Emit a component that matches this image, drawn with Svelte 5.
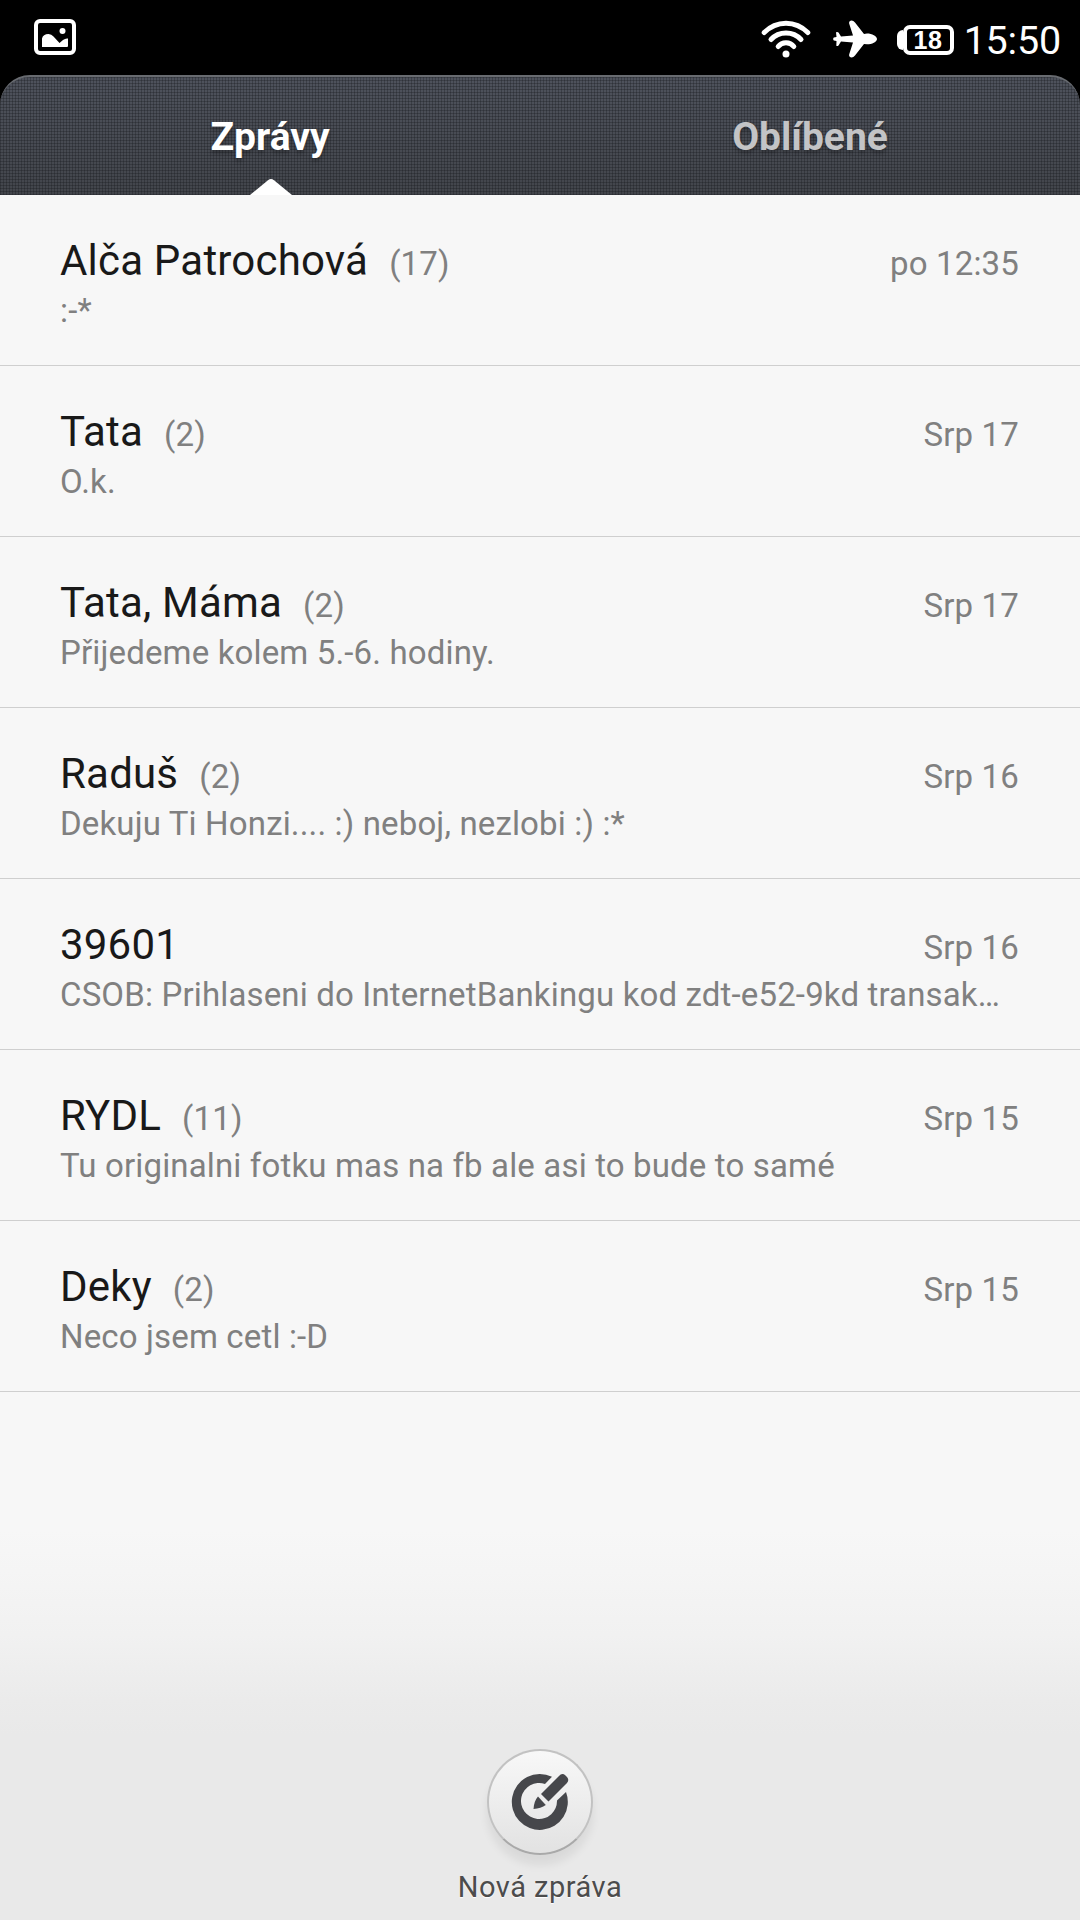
<script lang="ts">
  type Thread = { name: string; count?: number; date: string; preview: string };

  const threads: Thread[] = [
    { name: 'Alča Patrochová', count: 17, date: 'po 12:35', preview: ':-*' },
    { name: 'Tata', count: 2, date: 'Srp 17', preview: 'O.k.' },
    { name: 'Tata, Máma', count: 2, date: 'Srp 17', preview: 'Přijedeme kolem 5.-6. hodiny.' },
    { name: 'Raduš', count: 2, date: 'Srp 16', preview: 'Dekuju Ti Honzi.... :) neboj, nezlobi :) :*' },
    { name: '39601', date: 'Srp 16', preview: 'CSOB: Prihlaseni do InternetBankingu kod zdt-e52-9kd transak…' },
    { name: 'RYDL', count: 11, date: 'Srp 15', preview: 'Tu originalni fotku mas na fb ale asi to bude to samé' },
    { name: 'Deky', count: 2, date: 'Srp 15', preview: 'Neco jsem cetl :-D' },
  ];

  let active = $state(0);
  const tabs = ['Zprávy', 'Oblíbené'];
</script>

<div class="screen">
  <div class="status">
    <svg class="shot" viewBox="0 0 42 36" width="42" height="36">
      <rect x="2" y="2" width="38" height="32" rx="4" fill="none" stroke="#fff" stroke-width="4" />
      <path d="M8 28V19.500Q9 15 14.500 15Q17.500 15 19.500 17.500L25.500 24L29 21Q31.500 19 34 19.500V27Q34 28 33 28Z" fill="#fff" />
      <circle cx="28.500" cy="12" r="3" fill="#fff" />
    </svg>
    <div class="right">
      <svg class="wifi" viewBox="0 0 50 38" width="50" height="38" fill="none" stroke="#fff" stroke-width="5" stroke-linecap="round">
        <path d="M3.200 12.500Q12.500 3.200 25 3.200T46.800 12.500" />
        <path d="M10 19.500Q16 13 25 13T40 19.500" />
        <path d="M17.200 26.500Q20 22.800 25 22.800T32.800 26.500" />
        <circle cx="25" cy="34" r="3.500" fill="#fff" stroke="none" />
      </svg>
      <svg class="plane" viewBox="0 0 44 38" width="44" height="38" fill="#fff">
        <path d="M34 13.500C39 13.500 44 16 44 19S39 24.300 34 24.300L31 24L22 35.500Q20 38 17.500 37.300Q15.500 36.500 16.300 34L20 22.500L8 21.500L5.500 25.500Q4.500 26.500 3.300 25.700L3.500 21L.8 20.500Q-.5 19 .8 17.500L3.500 17L3 12.300Q4.500 11.500 5.500 12.500L8 16.500L20 15.500L16.300 4Q15.500 1.500 17.500.7Q20 0 22 2.500L31 14Z" />
      </svg>
      <div class="battery">
        <span class="nub"></span>
        <span class="cell">18</span>
      </div>
      <span class="clock">15:50</span>
    </div>
  </div>

  <nav class="tabs">
    {#each tabs as tab, i}
      <button type="button" class:active={active === i} onclick={() => (active = i)}>
        <span>{tab}</span>
        {#if active === i}
          <svg class="pointer" viewBox="0 0 42 16" width="42" height="16">
            <path d="M0 16L18 1.200Q21-1 24 1.200L42 16Z" fill="#fff" />
          </svg>
        {/if}
      </button>
    {/each}
  </nav>

  <ul class="list">
    {#each threads as t}
      <li>
        <div class="line">
          <span class="name">{t.name}</span>
          {#if t.count}<span class="count">({t.count})</span>{/if}
          <span class="date">{t.date}</span>
        </div>
        <div class="preview">{t.preview}</div>
      </li>
    {/each}
  </ul>

  <footer>
    <button type="button" class="compose" aria-label="Nová zpráva">
      <svg viewBox="0 0 58 58" width="58" height="58">
        <path d="M41 3.700A28 28 0 1 0 55 19L46 27.500A18 18 0 1 1 34 11Z" fill="#46474b" />
        <path d="M30 21L48 3Q51-.5 54.500 2.500L56 4Q58.500 7 56 10L37.500 28.500Z" fill="#46474b" />
        <path d="M27 23.500L34.800 32Q30 35.500 22.500 36Q23 28 27 23.500Z" fill="#46474b" />
      </svg>
    </button>
    <span class="label">Nová zpráva</span>
  </footer>
</div>

<style>
  :global(body) { background: #000; }
  .screen {
    display: flex;
    flex-direction: column;
    width: 1080px;
    height: 1920px;
    overflow: hidden;
    font-family: Roboto, "Noto Sans", sans-serif;
    background: linear-gradient(
      #000 195px, #f7f7f7 195px, #f7f7f7 1530px, #f5f5f5 1570px, #f1f1f1 1635px, #ebebeb 1700px, #e9e9e9 1735px
    );
  }
  .status {
    display: flex;
    justify-content: space-between;
    height: 75px;
    padding: 0 19px 0 34px;
    color: #fff;
  }
  .shot { margin-top: 19px; }
  .right { display: flex; }
  .wifi { margin-top: 20px; }
  .plane { margin: 20px 0 0 22px; }
  .battery {
    display: flex;
    align-items: center;
    height: 30px;
    margin: 25px 0 0 20px;
  }
  .nub {
    width: 6px;
    height: 20px;
    border-radius: 6px 0 0 6px;
    background: #fff;
  }
  .cell {
    box-sizing: border-box;
    width: 51px;
    height: 30px;
    border: 4px solid #fff;
    border-radius: 7px;
    font: bold 25px/23px "Liberation Sans", sans-serif;
    letter-spacing: 0.6px;
    text-align: center;
  }
  .clock {
    margin-left: 10px;
    font-size: 39.5px;
    line-height: 82px;
    letter-spacing: -0.2px;
  }
  .tabs {
    display: flex;
    height: 120px;
    box-sizing: border-box;
    border-top: 2px solid #686b70;
    border-radius: 30px 30px 0 0;
    background:
      repeating-linear-gradient(rgba(20, 22, 26, 0.3) 0 1px, transparent 1px 3px),
      repeating-linear-gradient(90deg, rgba(20, 22, 26, 0.3) 0 1px, transparent 1px 3px),
      linear-gradient(#4e525c, #42454b);
  }
  .tabs button {
    position: relative;
    flex: 1;
    padding: 0;
    border: none;
    background: none;
    color: #c3c4c6;
    font: bold 39px Roboto, sans-serif;
    text-shadow: 0 3px 4px rgba(0, 0, 0, 0.3);
    cursor: pointer;
  }
  .tabs button span {
    display: block;
    height: 118px;
    line-height: 120px;
  }
  .tabs .active { color: #fff; }
  .pointer {
    position: absolute;
    bottom: 0;
    left: 250px;
  }
  .list {
    margin: 0;
    padding: 0;
    list-style: none;
  }
  li {
    box-sizing: border-box;
    height: 171px;
    padding: 41px 61px 0 60px;
    border-bottom: 1px solid #cfcfcf;
  }
  .line {
    display: flex;
    align-items: baseline;
    height: 50px;
    line-height: 50px;
  }
  .name {
    color: #191919;
    font-size: 42px;
    letter-spacing: 0.2px;
  }
  .count { margin-left: 21px; }
  .count, .date, .preview {
    color: #808080;
    font-size: 33px;
    letter-spacing: 0.15px;
  }
  .date { margin-left: auto; }
  .preview {
    line-height: 50px;
    white-space: nowrap;
  }
  footer {
    display: flex;
    flex-direction: column;
    align-items: center;
    margin-top: auto;
    height: 171px;
  }
  .compose {
    display: flex;
    align-items: center;
    justify-content: center;
    box-sizing: border-box;
    width: 106px;
    height: 106px;
    padding: 0;
    border: 2px solid #c2c2c2;
    border-bottom-color: #a9a9a9;
    border-radius: 50%;
    background: linear-gradient(#f8f8f8, #e2e2e2);
    box-shadow: 0 10px 10px rgba(0, 0, 0, 0.07);
    cursor: pointer;
  }
  .label {
    margin-top: 14px;
    color: #4c4c4c;
    font-size: 29px;
    letter-spacing: 0.5px;
    line-height: 36px;
    text-shadow: 0 1px 1px #fff;
  }
</style>
